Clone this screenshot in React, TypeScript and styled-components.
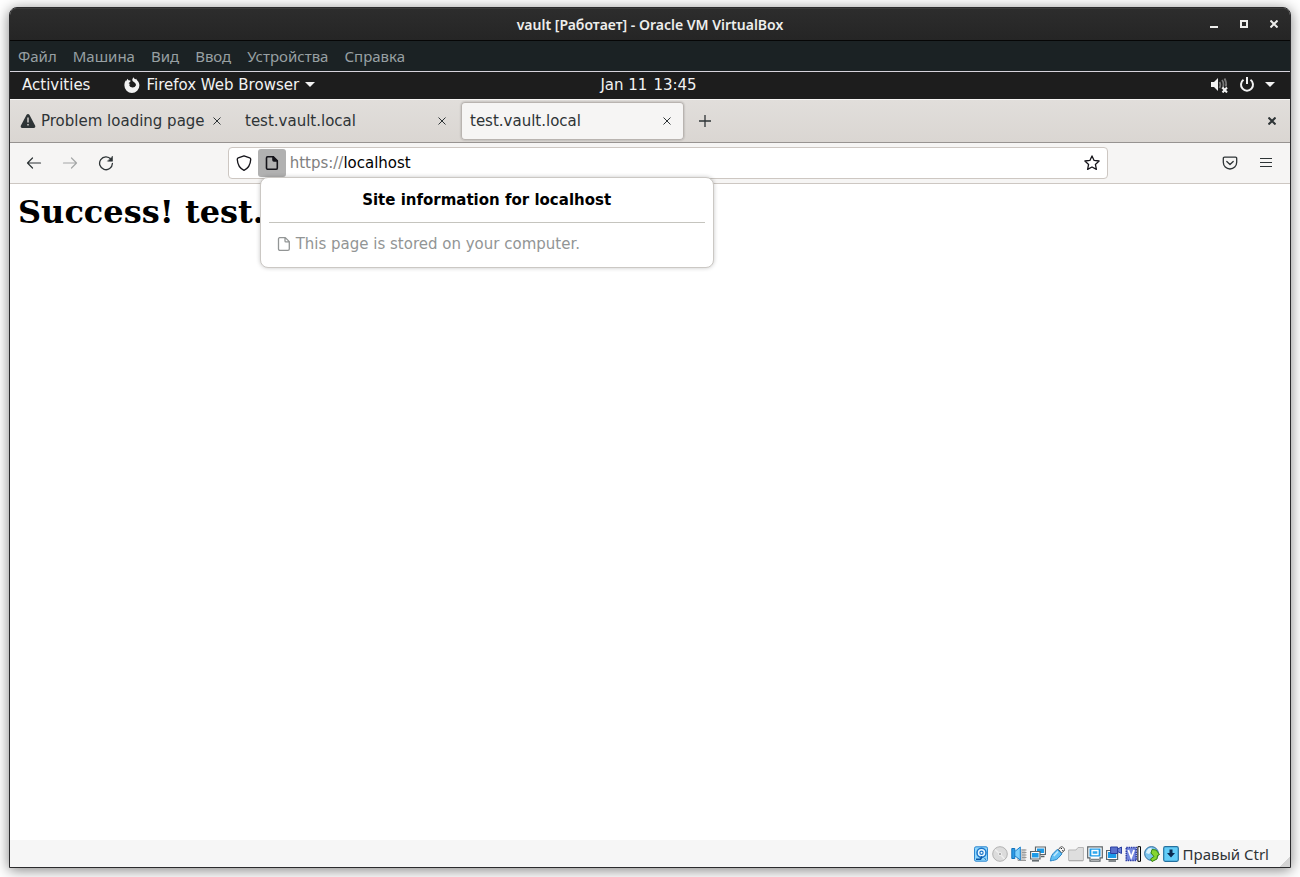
import React from "react";
import styled, { createGlobalStyle } from "styled-components";

const ui = `"DejaVu Sans", sans-serif`;
const host = `"Noto Sans", sans-serif`;

const Global = createGlobalStyle`
  *, *::before, *::after { box-sizing: border-box; }
  body { margin: 0; background: #fff; }
  button, input { font: inherit; color: inherit; margin: 0; padding: 0; border: 0; background: none; }
  svg { display: block; flex: none; }
`;

const Desktop = styled.div`
  display: flex;
  min-height: 100vh;
  padding: 7px 9px 9px;
`;

const HostWindow = styled.div`
  flex: 1;
  min-width: 0;
  display: flex;
  flex-direction: column;
  border: 1px solid #2b2b2d;
  border-radius: 8px 8px 0 0;
  background: #fff;
  box-shadow: 0 2px 14px rgba(0, 0, 0, 0.5);
`;

const TitleBar = styled.header`
  display: grid;
  grid-template-columns: 1fr auto 1fr;
  align-items: center;
  height: 33px;
  border-bottom: 1px solid #060606;
  border-radius: 7px 7px 0 0;
  background: linear-gradient(#2d2d2d, #252525);
  box-shadow: inset 0 1px #3a3a3a;
`;

const Title = styled.h1`
  grid-column: 2;
  margin: 0;
  padding-top: 2px;
  font: 600 14px/20px ${host};
  color: #eeeeec;
`;

const WindowButtons = styled.div`
  display: flex;
  justify-content: flex-end;
  padding-right: 1px;
`;

const WindowButton = styled.button`
  display: flex;
  align-items: center;
  justify-content: center;
  width: 30px;
  height: 32px;
  color: #eeeeec;
`;

const MenuBar = styled.nav`
  display: flex;
  align-items: center;
  gap: 16px;
  height: 31px;
  padding: 0 8px;
  border-bottom: 1px solid #d6d3dc;
  background: #1b2224;
  font: 15px/20px ${host};
  color: #98a0a3;
`;

const GnomeBar = styled.div`
  display: grid;
  grid-template-columns: 1fr auto 1fr;
  align-items: center;
  height: 27px;
  padding: 0 15px 2px 12px;
  background: #1d1d1d;
  font: 15px/20px ${ui};
  color: #f2f2f2;
`;

const GnomeGroup = styled.div<{ $end?: boolean }>`
  display: flex;
  align-items: center;
  justify-content: ${(p) => (p.$end ? "flex-end" : "flex-start")};
  gap: ${(p) => (p.$end ? 10 : 34)}px;
`;

const GnomeButton = styled.button`
  display: flex;
  align-items: center;
  gap: 6px;
`;

const TabStrip = styled.div`
  display: flex;
  align-items: center;
  height: 44px;
  padding: 0 0 0 1px;
  border-top: 1px solid #f7f5f4;
  border-bottom: 1px solid #979391;
  background: linear-gradient(#e1dedb, #dad6d2);
  color: #2e3436;
`;

const Tab = styled.div<{ $active?: boolean }>`
  display: flex;
  align-items: center;
  width: 223px;
  height: 38px;
  margin-right: 2px;
  padding: 0 9px;
  border-radius: 4px;
  background: ${(p) => (p.$active ? "#f6f5f4" : "transparent")};
  box-shadow: ${(p) => (p.$active ? "inset 0 0 0 1px #b9b4b0, 0 0 2px rgba(0, 0, 0, 0.3)" : "none")};
`;

const TabLabel = styled.button`
  flex: 1;
  display: flex;
  align-items: center;
  gap: 5px;
  white-space: nowrap;
  font: 15px/20px ${ui};
`;

const IconButton = styled.button<{ $size: number; $dim?: boolean }>`
  display: flex;
  flex: none;
  align-items: center;
  justify-content: center;
  width: ${(p) => p.$size}px;
  height: ${(p) => p.$size}px;
  opacity: ${(p) => (p.$dim ? 0.4 : 1)};
`;

const StripSpacer = styled.div`
  flex: 1;
`;

const NavBar = styled.div`
  display: flex;
  align-items: center;
  height: 41px;
  padding: 0 6px;
  border-bottom: 1px solid #cdc7c2;
  background: #f6f5f4;
  color: #2e3436;
`;

const Spring = styled.div`
  flex: 13 1 0;
`;

const UrlBar = styled.div`
  position: relative;
  flex: 110 1 0;
  display: flex;
  align-items: center;
  height: 32px;
  padding: 0 1px;
  border: 1px solid #cdc7c2;
  border-radius: 4px;
  background: #fff;
  color: #15141a;
`;

const Identity = styled.div`
  position: relative;
  border-radius: 3px;
  background: #b1b1b1;
`;

const UrlLabel = styled.label`
  padding-left: 4px;
  font: 15px/20px ${ui};
  color: #808080;
`;

const UrlInput = styled.input`
  && {
    flex: 1;
    min-width: 0;
    height: 20px;
    font: 15px/20px ${ui};
    color: #000;
    outline: none;
  }
`;

const Popup = styled.section`
  position: absolute;
  z-index: 2;
  top: 100%;
  left: 2px;
  width: 454px;
  padding: 0 8px;
  border: 1px solid #cbc8c4;
  border-radius: 8px;
  background: #fff;
  box-shadow: 0 0 4px rgba(0, 0, 0, 0.22);
`;

const PopupTitle = styled.h2`
  margin: 0;
  padding: 12px 0;
  border-bottom: 1px solid #c5c4be;
  font: bold 15px/20px ${ui};
  text-align: center;
  color: #000;
`;

const PopupText = styled.p`
  display: flex;
  align-items: center;
  gap: 4px;
  margin: 0;
  padding: 11px 7px 13px;
  font: 15px/20px ${ui};
  color: #929595;
`;

const Page = styled.main`
  flex: 1;
  padding: 8px;
  background: #fff;
`;

const Heading = styled.h1`
  margin: 0;
  font: bold 32px/40px "DejaVu Serif", serif;
  color: #000;
`;

const StatusBar = styled.footer`
  display: flex;
  align-items: center;
  justify-content: flex-end;
  gap: 3px;
  height: 27px;
  background: linear-gradient(135deg, transparent 50%, #d4d4d4 50%) right bottom / 10px 10px no-repeat #f6f6f6;
`;

const HostKey = styled.span`
  padding: 0 21px 0 1px;
  font: 15px/20px ${host};
  color: #2e3436;
`;

const Cross = ({ size = 8, w = 1.2 }: { size?: number; w?: number }) => (
  <svg width={size} height={size} viewBox="0 0 8 8" fill="none" stroke="currentColor" strokeWidth={w}>
    <path d="M.5.5l7 7M7.5.5l-7 7" />
  </svg>
);

const Caret = () => (
  <svg width="10" height="5" viewBox="0 0 10 5" fill="currentColor">
    <path d="M0 0h10L5 5z" />
  </svg>
);

const Doc = () => (
  <svg width="16" height="16" viewBox="0 0 16 16" fill="none" stroke="currentColor" strokeWidth="1.6" strokeLinejoin="round">
    <path d="M3.7 1.7h5.6l4 4v7.2a1.4 1.4 0 0 1-1.4 1.4H3.9a1.4 1.4 0 0 1-1.4-1.4V3a1.3 1.3 0 0 1 1.2-1.3z" />
    <path d="M9 1.8v3.3c0 .6.4.9.9.9h3.3z" fill="currentColor" />
  </svg>
);

const DocLight = () => (
  <svg width="16" height="16" viewBox="0 0 16 16" fill="none" stroke="currentColor" strokeWidth="1.3" strokeLinejoin="round">
    <path d="M3.7 1.6h5.6l4 4v7.4a1.4 1.4 0 0 1-1.4 1.4H3.9a1.4 1.4 0 0 1-1.4-1.4V3a1.3 1.3 0 0 1 1.2-1.4zM9 1.8V5c0 .6.4.9.9.9h3.3" />
  </svg>
);

const Glyph = ({ children, w = 1.3 }: { children: React.ReactNode; w?: number }) => (
  <svg width="16" height="16" viewBox="0 0 16 16" fill="none" stroke="currentColor" strokeWidth={w} strokeLinecap="round" strokeLinejoin="round">
    {children}
  </svg>
);

const menus = ["Файл", "Машина", "Вид", "Ввод", "Устройства", "Справка"];

const tabs = [
  { label: "Problem loading page", warn: true },
  { label: "test.vault.local" },
  { label: "test.vault.local", active: true },
];

const blue = "#1c9be8";
const edge = "#5c6468";

const indicators: React.ReactNode[] = [
  <>
    <rect x="1.5" y=".8" width="13" height="14.400" rx="1.5" fill="#8fd6fb" stroke="#2c87d0" />
    <circle cx="8.5" cy="6.800" r="4.500" fill="#e8f7ff" stroke="#1a74c9" strokeWidth="1.500" />
    <circle cx="8.5" cy="6.800" r="1.600" fill="#fff" stroke="#1a74c9" strokeWidth="1.200" />
    <path d="M3 13.300h4.500L9 10.500" stroke="#0c56a4" strokeWidth="1.600" />
    <path d="M11.500 12.500l1.500 1" stroke="#0c56a4" />
  </>,
  <>
    <circle cx="8" cy="8" r="7.300" fill="#dcdcdc" stroke="#b2b2b2" />
    <path d="M8 8L3 3.500M8 8l4.500 5" stroke="#efefef" strokeWidth="1.500" />
    <circle cx="8" cy="8" r="1.700" fill="#b2b2b2" stroke="#eee" />
  </>,
  <>
    <path d="M9 3h5.500v11.500H6V12h3z" fill="#c9c9c9" />
    <path d="M11 4h4.500M11 6.500h4.500M11 9h4.500M11 11.500h4.500M7 14.500h8" stroke="#999" />
    <path d="M.8 2.500h3v10h-3z" fill="#2b9be6" stroke="#1273bd" />
    <path d="M3.800 5.500L9.300 1v13L3.800 9.800z" fill="#7fd0fb" stroke="#1a80cf" />
  </>,
  <>
    <path d="M5.500 1h9.900v7.500H5.500z" fill="#fff" stroke={edge} strokeWidth="1.200" />
    <path d="M7 2.500h7V7H7z" fill={blue} />
    <path d="M11 10.500h3.500" stroke={edge} strokeWidth="1.500" />
    <path d="M.6 5.500h9.400V13H.6z" fill="#fff" stroke={edge} strokeWidth="1.200" />
    <path d="M2 7h6.600v4.500H2z" fill={blue} />
    <path d="M2 14.800h7" stroke={edge} strokeWidth="1.500" />
  </>,
  <>
    <path d="M9.500 3.500l2-2.500c1.500-1 4.500 1 4 3.500L12.500 7z" fill="#f6f6f6" stroke="#555" />
    <path d="M11.800 2.500h1.200M13.300 4.500h1" stroke="#222" strokeWidth="1.200" />
    <path d="M8.300 3.300l4.700 4.500-4 4.500c-2 2.200-4.500 1.700-7.700 2.700C2 12.500 1.700 10.300 4 7.700z" fill="#62c0f5" stroke="#2683c6" />
    <path d="M4.800 10L9 5.500" stroke="#c2e9fd" strokeWidth="1.600" />
  </>,
  <>
    <path d="M.6 4h7.400l2-2.500h5.400v13H.6z" fill="#dedede" stroke="#b7b7b7" />
    <path d="M1 14.800h14" stroke="#aaa" />
  </>,
  <>
    <path d="M.7.800h14.600v11H13v3.400H3v-3.400H.7z" fill="#fff" stroke={edge} strokeWidth="1.200" />
    <path d="M2.500 2.500h11v8h-11z" fill={blue} />
    <path d="M5 4.500h6v4H5z" fill="#2fa8ee" stroke="#fff" strokeWidth="1.300" />
    <path d="M4 13.300h8" stroke={edge} />
  </>,
  <>
    <path d="M.6 4.500h11v9H.6z" fill="#fff" stroke={edge} strokeWidth="1.200" />
    <path d="M2 6h8.300v6H2z" fill={blue} />
    <path d="M2.500 15h7.500" stroke={edge} strokeWidth="1.500" />
    <path d="M4.600 1h7v6.500h-7z" fill="#5a70cc" stroke="#2b3f9f" />
    <path d="M11.600 3l3.900-2v6.500l-3.900-2z" fill="#6c80d6" stroke="#2b3f9f" />
  </>,
  <>
    <path d="M1.300 1.500h9.900v13H1.300z" fill="#7588de" stroke="#2c3da6" strokeWidth="1.600" strokeDasharray="1.500 .8" />
    <path d="M3.300 4l2.900 7.500L9.100 4" stroke="#fff" strokeWidth="1.800" />
    <path d="M12.900 .7h2.600v14.600h-2.600z" fill="#fff" stroke="#000" />
  </>,
  <>
    <circle cx="7.500" cy="7.500" r="6.900" fill="#7cc4ed" stroke="#346f9e" />
    <path d="M2 7c1-4 3-5 5-5l2 2-4 4z" fill="#d8f0fb" />
    <path d="M8 3.500l4 .5 3.500 4.500-2 1-.5 3.500-5 2.500-1.500-2.500L10 10.500 7 7z" fill="#85d531" stroke="#36840f" />
  </>,
  <>
    <rect x=".7" y=".7" width="14.600" height="14.600" rx="1.500" fill="#63cdf8" stroke="#24719f" strokeWidth="1.200" />
    <path d="M6.500 3.500h3V7H12l-4 4.500L4 7h2.500z" fill="#0b2a50" />
  </>,
];

export default function App() {
  return (
    <Desktop>
      <Global />
      <HostWindow>
        <TitleBar>
          <Title>vault [Работает] - Oracle VM VirtualBox</Title>
          <WindowButtons>
            <WindowButton aria-label="Minimize">
              <svg width="8" height="8" viewBox="0 0 8 8" fill="currentColor"><path d="M0 6h8v2H0z" /></svg>
            </WindowButton>
            <WindowButton aria-label="Maximize">
              <svg width="8" height="8" viewBox="0 0 8 8" fill="none" stroke="currentColor" strokeWidth="2"><path d="M1 1h6v6H1z" /></svg>
            </WindowButton>
            <WindowButton aria-label="Close"><Cross w={2} /></WindowButton>
          </WindowButtons>
        </TitleBar>
        <MenuBar>
          {menus.map((m) => <button key={m}>{m}</button>)}
        </MenuBar>
        <GnomeBar>
          <GnomeGroup>
            <GnomeButton>Activities</GnomeButton>
            <GnomeButton>
              <svg width="16" height="16" viewBox="0 0 16 16" fill="currentColor">
                <path fillRule="evenodd" d="M8.300 2.600C8.500 1.600 9 .9 9.800.2c.1 1.100.7 1.500 1.600 2.100l.8-.5c.2.900.7 1.300 1.300 2 1.300 1.300 2 2.900 1.900 4.700A7.500 7.500 0 0 1 .4 8.500c0-2 .4-3.600 1.300-5.200l.2 1.300C2.500 3.300 3 2.400 4 1.800c0 .8.100 1.100.6 1.500.8-.1 1.600.1 2.200.5L5.800 5.300c-.7.200-1.100.7-1 1.300l1.500.3c-.3.500-1 .7-1.300.9A3.700 3.700 0 0 0 12 8.300c0-1.300-.6-2.200-1.500-2.900-1.300-.7-2.400-1.300-2.200-2.800z" />
              </svg>
              Firefox Web Browser
              <Caret />
            </GnomeButton>
          </GnomeGroup>
          <GnomeButton><span>Jan 11</span><span>13:45</span></GnomeButton>
          <GnomeGroup $end>
            <GnomeButton aria-label="Sound muted">
              <svg width="18" height="16" viewBox="0 0 18 16" fill="none">
                <path d="M0 5h3l4-4v13l-4-4H0z" fill="#f2f2f2" />
                <path d="M8.500 5c1 1.500 1 4 0 6M11 3c2 2.500 2 6.500 0 9M13.500 1.500c1.500 2.500 2 5.500 1.300 8" stroke="#777" strokeWidth="1.800" />
                <path d="M11.500 10.500l4.500 5M16 10.500l-4.500 5" stroke="#f2f2f2" strokeWidth="2" />
              </svg>
            </GnomeButton>
            <GnomeButton aria-label="Power">
              <svg width="16" height="16" viewBox="0 0 16 16" fill="none" stroke="currentColor" strokeWidth="2">
                <path d="M4.500 2.800a6 6 0 1 0 7 0M8 0v7" />
              </svg>
            </GnomeButton>
            <GnomeButton aria-label="System menu"><Caret /></GnomeButton>
          </GnomeGroup>
        </GnomeBar>
        <TabStrip>
          {tabs.map((t, i) => (
            <Tab key={i} $active={t.active}>
              <TabLabel>
                {t.warn && (
                  <svg width="16" height="16" viewBox="0 0 16 16" fill="currentColor">
                    <path fillRule="evenodd" d="M6.600 1.800a1.600 1.600 0 0 1 2.800 0l5.700 10.800a1.500 1.500 0 0 1-1.400 2.300H2.300a1.500 1.500 0 0 1-1.400-2.300zM7.300 4.500v5h1.400v-5zM7.300 11v1.500h1.400V11z" />
                  </svg>
                )}
                {t.label}
              </TabLabel>
              <IconButton $size={16} aria-label="Close tab"><Cross w={1} /></IconButton>
            </Tab>
          ))}
          <IconButton $size={38} aria-label="New tab">
            <svg width="12" height="12" viewBox="0 0 12 12" stroke="currentColor" strokeWidth="1.300"><path d="M6 0v12M0 6h12" /></svg>
          </IconButton>
          <StripSpacer />
          <IconButton $size={36} aria-label="Close window"><Cross w={2} /></IconButton>
        </TabStrip>
        <NavBar>
          <IconButton $size={36} aria-label="Back"><Glyph w={1.200}><path d="M14.500 8h-13M6.500 3l-5 5 5 5" /></Glyph></IconButton>
          <IconButton $size={36} $dim aria-label="Forward"><Glyph w={1.200}><path d="M1.500 8h13M9.500 3l5 5-5 5" /></Glyph></IconButton>
          <IconButton $size={36} aria-label="Reload">
            <Glyph>
              <path d="M13 4.300A6.400 6.400 0 1 0 14.400 8.500" />
              <path d="M14.500 1.500v4.700H9.800z" fill="currentColor" strokeWidth=".6" />
            </Glyph>
          </IconButton>
          <Spring />
          <UrlBar>
            <IconButton $size={28} aria-label="Tracking protection">
              <Glyph><path d="M8 .8l5.700 2.100c.8.300 1.100.9 1 1.700-.3 5-2.500 8.700-6.700 10.700C3.800 13.300 1.600 9.600 1.300 4.600c-.1-.8.2-1.400 1-1.700z" /></Glyph>
            </IconButton>
            <Identity>
              <IconButton $size={28} aria-label="Site information"><Doc /></IconButton>
              <Popup>
                <PopupTitle>Site information for localhost</PopupTitle>
                <PopupText><DocLight />This page is stored on your computer.</PopupText>
              </Popup>
            </Identity>
            <UrlLabel htmlFor="url">https://</UrlLabel>
            <UrlInput id="url" defaultValue="localhost" />
            <IconButton $size={28} aria-label="Bookmark this page">
              <Glyph><path d="M8 .9l2.100 4.500 5 .6-3.700 3.400 1 5L8 12l-4.400 2.400 1-5L.9 6l5-.6z" /></Glyph>
            </IconButton>
          </UrlBar>
          <Spring />
          <IconButton $size={36} aria-label="Save to Pocket">
            <Glyph><path d="M2.500 2.200h11a1.200 1.200 0 0 1 1.200 1.200v3.900a6.700 6.700 0 0 1-13.400 0V3.400a1.200 1.200 0 0 1 1.200-1.200zM4.800 6.500L8 9.500l3.200-3" /></Glyph>
          </IconButton>
          <IconButton $size={36} aria-label="Open menu">
            <svg width="12" height="10" viewBox="0 0 12 10" stroke="currentColor"><path d="M0 .5h12M0 4.500h12M0 8.500h12" /></svg>
          </IconButton>
        </NavBar>
        <Page>
          <Heading>Success! test.</Heading>
        </Page>
        <StatusBar>
          {indicators.map((icon, i) => (
            <svg key={i} width="16" height="16" viewBox="0 0 16 16" fill="none">{icon}</svg>
          ))}
          <HostKey>Правый Ctrl</HostKey>
        </StatusBar>
      </HostWindow>
    </Desktop>
  );
}
